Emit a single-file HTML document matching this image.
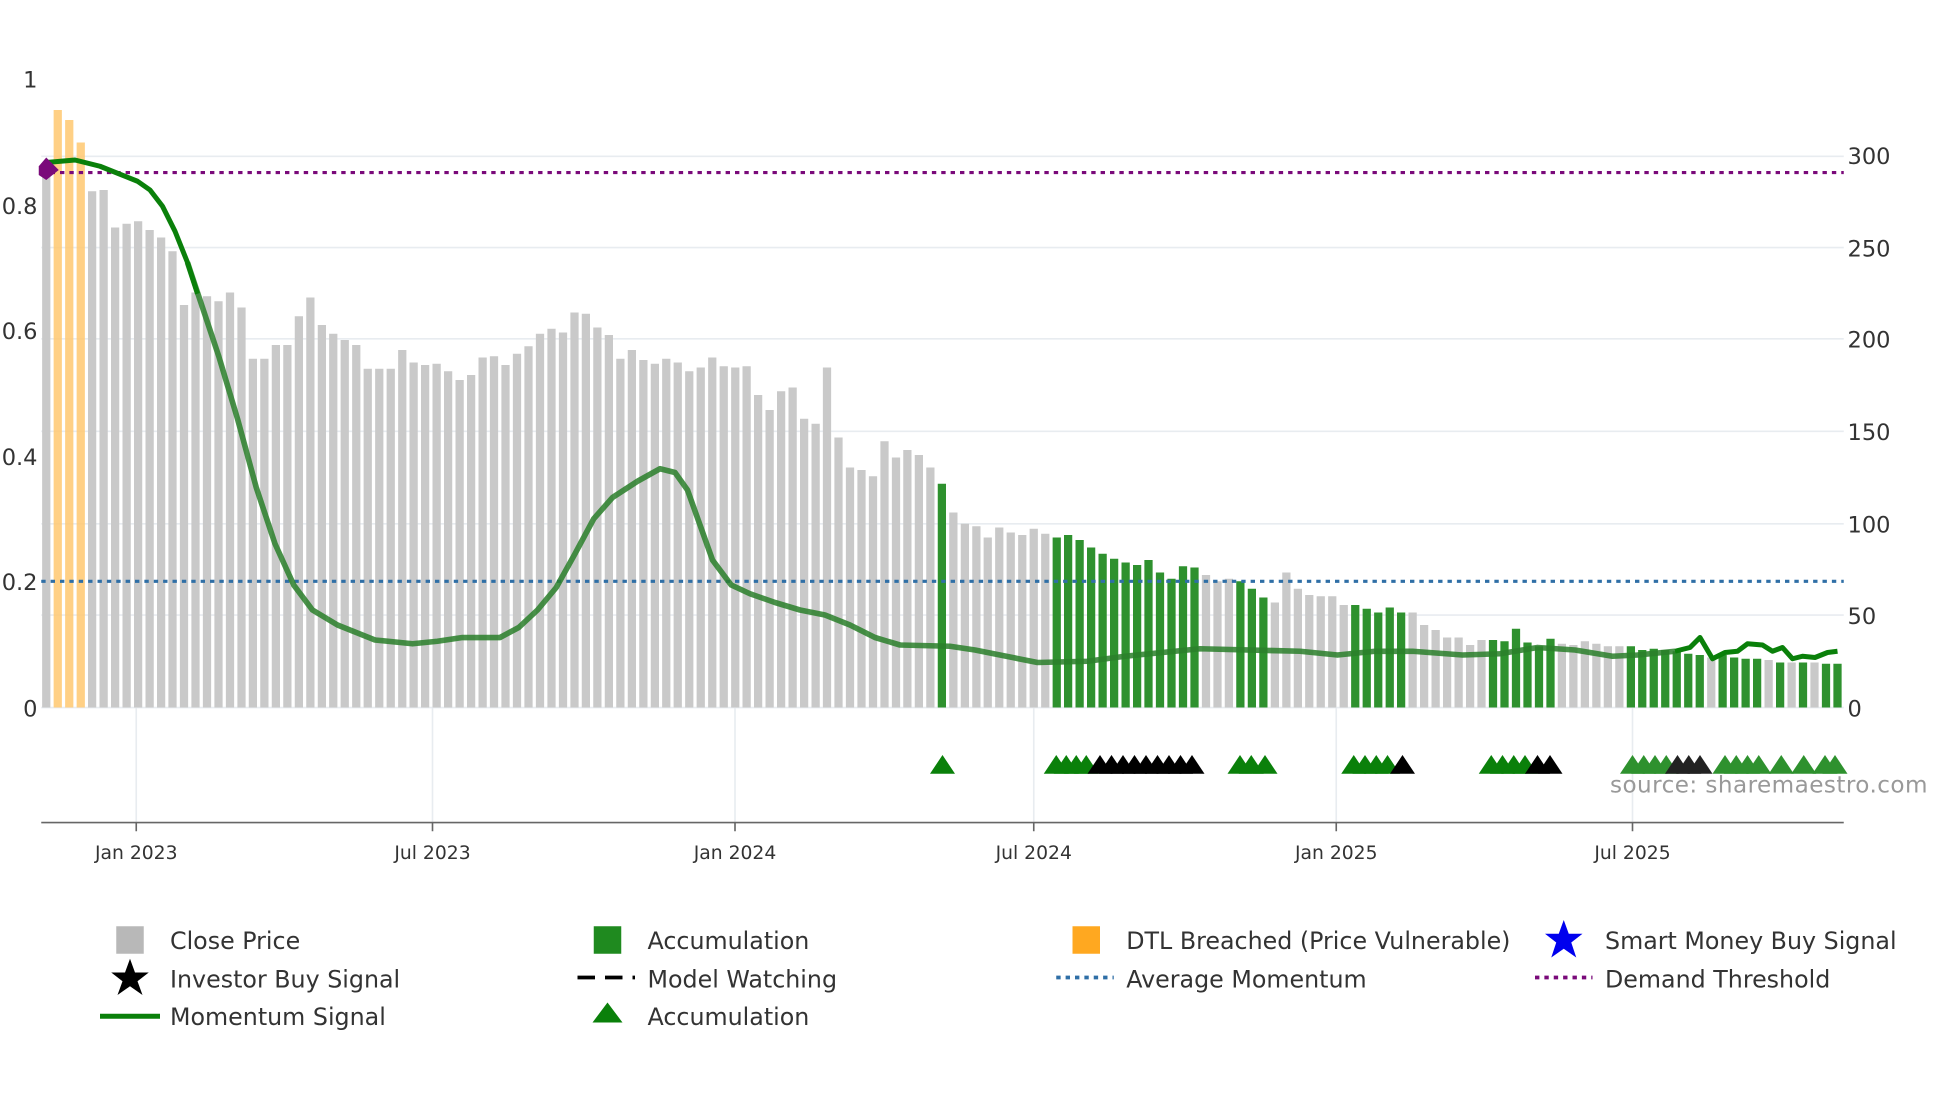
<!DOCTYPE html>
<html><head><meta charset="utf-8">
<style>
html,body{margin:0;padding:0;background:#fff;width:1960px;height:1102px;overflow:hidden}
svg text{font-family:"DejaVu Sans","Liberation Sans",sans-serif;fill:#333}
</style></head>
<body>
<svg id="s" width="1960" height="1102" viewBox="0 0 1568 881.6" xmlns="http://www.w3.org/2000/svg">
<rect width="1568" height="882" fill="#fff"/>
<g id="grid" stroke="#e8ecf0" stroke-width="1.3">
<line x1="33" x2="1475" y1="125" y2="125"/>
<line x1="33" x2="1475" y1="198" y2="198"/>
<line x1="33" x2="1475" y1="271" y2="271"/>
<line x1="33" x2="1475" y1="345" y2="345"/>
<line x1="33" x2="1475" y1="419" y2="419"/>
<line x1="33" x2="1475" y1="492" y2="492"/>
<line x1="33" x2="1475" y1="566" y2="566"/>
<line x1="109" x2="109" y1="566" y2="658"/>
<line x1="346" x2="346" y1="566" y2="658"/>
<line x1="588" x2="588" y1="566" y2="658"/>
<line x1="827" x2="827" y1="566" y2="658"/>
<line x1="1069" x2="1069" y1="566" y2="658"/>
<line x1="1306" x2="1306" y1="566" y2="658"/>
</g>
<g id="bars"></g>
<line x1="33" x2="1475" y1="465" y2="465" stroke="#2f6fa6" stroke-width="2.5" stroke-dasharray="3.5,4"/>
<line x1="33" x2="1475" y1="138" y2="138" stroke="#7a0a7a" stroke-width="2.5" stroke-dasharray="3.5,4"/>
<polyline fill="none" stroke="#2a7f2a" stroke-opacity="0.85" stroke-width="4.5" stroke-linejoin="round"
points="150,210 160,240 175,285 190,335 205,390 220,435 235,468 250,488 270,500 300,512 330,515 350,513 370,510 400,510 415,502 430,488 445,470 460,443 475,415 490,398 510,385 528,375 540,378 550,392 560,420 570,448 585,468 600,475 620,482 640,488 660,492 680,500 700,510 720,516 760,517 780,520 800,524 830,530 870,529 900,525 960,519 1040,521 1070,524 1100,521 1130,521 1170,524 1200,523 1230,518 1260,520 1290,525 1310,524 1340,521"/>
<polyline fill="none" stroke="#0a800a" stroke-width="4" stroke-linejoin="round"
points="37,130 60,128 80,133 110,145 120,152 130,165 140,185 150,210 158,235"/>
<polyline fill="none" stroke="#0a800a" stroke-width="4" stroke-linejoin="round"
points="1340,521 1352,518 1360,510 1370,527 1380,522 1390,521 1398,515 1410,516 1418,521 1426,518 1434,527 1442,525 1452,526 1462,522 1470,521"/>
<path d="M31,133 L37,126 L47,136 L37,144 L31,140Z" fill="#7a0a7a"/>
<g id="tri"></g>
<line x1="33" x2="1475" y1="658" y2="658" stroke="#666" stroke-width="1.3"/>
<g stroke="#666" stroke-width="1.3">
<line x1="109" x2="109" y1="658" y2="665"/><line x1="346" x2="346" y1="658" y2="665"/><line x1="588" x2="588" y1="658" y2="665"/><line x1="827" x2="827" y1="658" y2="665"/><line x1="1069" x2="1069" y1="658" y2="665"/><line x1="1306" x2="1306" y1="658" y2="665"/>
</g>
<g font-size="15" text-anchor="middle">
<text x="109" y="687">Jan 2023</text><text x="346" y="687">Jul 2023</text><text x="588" y="687">Jan 2024</text><text x="827" y="687">Jul 2024</text><text x="1069" y="687">Jan 2025</text><text x="1306" y="687">Jul 2025</text>
</g>
<g font-size="18" text-anchor="end">
<text x="30" y="70">1</text><text x="30" y="171">0.8</text><text x="30" y="271">0.6</text><text x="30" y="372">0.4</text><text x="30" y="472">0.2</text><text x="30" y="573">0</text>
</g>
<g font-size="18">
<text x="1478" y="131">300</text><text x="1478" y="205">250</text><text x="1478" y="278">200</text><text x="1478" y="352">150</text><text x="1478" y="426">100</text><text x="1478" y="499">50</text><text x="1478" y="573">0</text>
</g>
<text x="1288" y="634" font-size="18.5" textLength="254" style="fill:#999">source: sharemaestro.com</text>
<g font-size="19">
<rect x="93" y="741" width="22" height="22" fill="#b8b8b8"/><text x="136" y="759">Close Price</text>
<path d="M104,767 L108,778 L119,778 L110,785 L114,796 L104,789 L94,796 L98,785 L89,778 L100,778Z" fill="#000"/><text x="136" y="790">Investor Buy Signal</text>
<line x1="80" x2="128" y1="813" y2="813" stroke="#0a800a" stroke-width="4"/><text x="136" y="820">Momentum Signal</text>
<rect x="475" y="741" width="22" height="22" fill="#1f8a1f"/><text x="518" y="759">Accumulation</text>
<line x1="462" x2="508" y1="782" y2="782" stroke="#000" stroke-width="3" stroke-dasharray="14,8"/><text x="518" y="790">Model Watching</text>
<path d="M474,818 L486,802 L498,818Z" fill="#0a800a"/><text x="518" y="820">Accumulation</text>
<rect x="858" y="741" width="22" height="22" fill="#ffa820"/><text x="901" y="759">DTL Breached (Price Vulnerable)</text>
<line x1="845" x2="891" y1="782" y2="782" stroke="#2f6fa6" stroke-width="3" stroke-dasharray="3.5,4"/><text x="901" y="790">Average Momentum</text>
<path d="M1251,736 L1255,747 L1266,747 L1257,754 L1261,766 L1251,759 L1241,766 L1245,754 L1236,747 L1247,747Z" fill="#0000ee"/><text x="1284" y="759">Smart Money Buy Signal</text>
<line x1="1228" x2="1274" y1="782" y2="782" stroke="#7a0a7a" stroke-width="3" stroke-dasharray="3.5,4"/><text x="1284" y="790">Demand Threshold</text>
</g>
</svg>
<script>
var tops=[140,88,96,114,153,152,182,179,177,184,190,201,244,234,237,241,234,246,287,287,276,276,253,238,260,267,272,276,295,295,295,280,290,292,291,297,304,300,286,285,292,283,277,267,263,266,250,251,262,268,287,280,288,291,287,290,297,294,286,293,294,293,316,328,313,310,335,339,294,350,374,376,381,353,366,360,364,374,387,410,419,421,430,422,426,428,423,427,430,428,432,438,443,447,450,452,448,458,463,453,454,460,465,463,465,471,478,482,458,471,476,477,477,484,484,487,490,486,490,490,500,504,510,510,516,512,512,513,503,514,517,511,515,516,513,515,517,517,517,520,519,520,521,523,524,526,524,526,527,527,528,530,530,530,530,531,531];
var N=tops.length,x0=37,x1=1470,step=(x1-x0)/(N-1);
var G=[[753,753],[845,955],[992,1010],[1084,1121],[1194,1240],[1305,1360],[1378,1406],[1424,1424],[1442,1442],[1461,1470]];
var b=document.getElementById('bars'),h='';
for(var i=0;i<N;i++){var x=x0+step*i,c='#c9c9c9',op=1;
for(var g of G)if(x>=g[0]-4&&x<=g[1]+4)c='#2e912e';
if(i>=1&&i<=3){c='#ffc870';op=0.85;}
h+='<rect x="'+(x-3.3).toFixed(1)+'" y="'+tops[i]+'" width="6.6" height="'+(566-tops[i])+'" fill="'+c+'" fill-opacity="'+op+'"/>';}
b.innerHTML=h;
var t='',tri=function(x,c){t+='<path d="M'+(x-10)+',619 L'+x+',604 L'+(x+10)+',619Z" fill="'+c+'"/>';};
tri(754,'#0a800a');
[845,853,861,869].forEach(function(x){tri(x,'#0a800a')});
for(var x=880;x<=960;x+=9.2)tri(x,'#000');
[992,1001,1012].forEach(function(x){tri(x,'#0a800a')});
[1083,1092,1101,1110].forEach(function(x){tri(x,'#0a800a')});tri(1122,'#000');
[1193,1202,1211,1220].forEach(function(x){tri(x,'#0a800a')});[1230,1240].forEach(function(x){tri(x,'#000')});
[1306,1315,1324,1333].forEach(function(x){tri(x,'#2e912e')});[1342,1351,1360].forEach(function(x){tri(x,'#222')});
[1380,1389,1398,1407,1425,1443,1460,1468].forEach(function(x){tri(x,'#2e912e')});
document.getElementById('tri').innerHTML=t;
</script>
</body></html>
